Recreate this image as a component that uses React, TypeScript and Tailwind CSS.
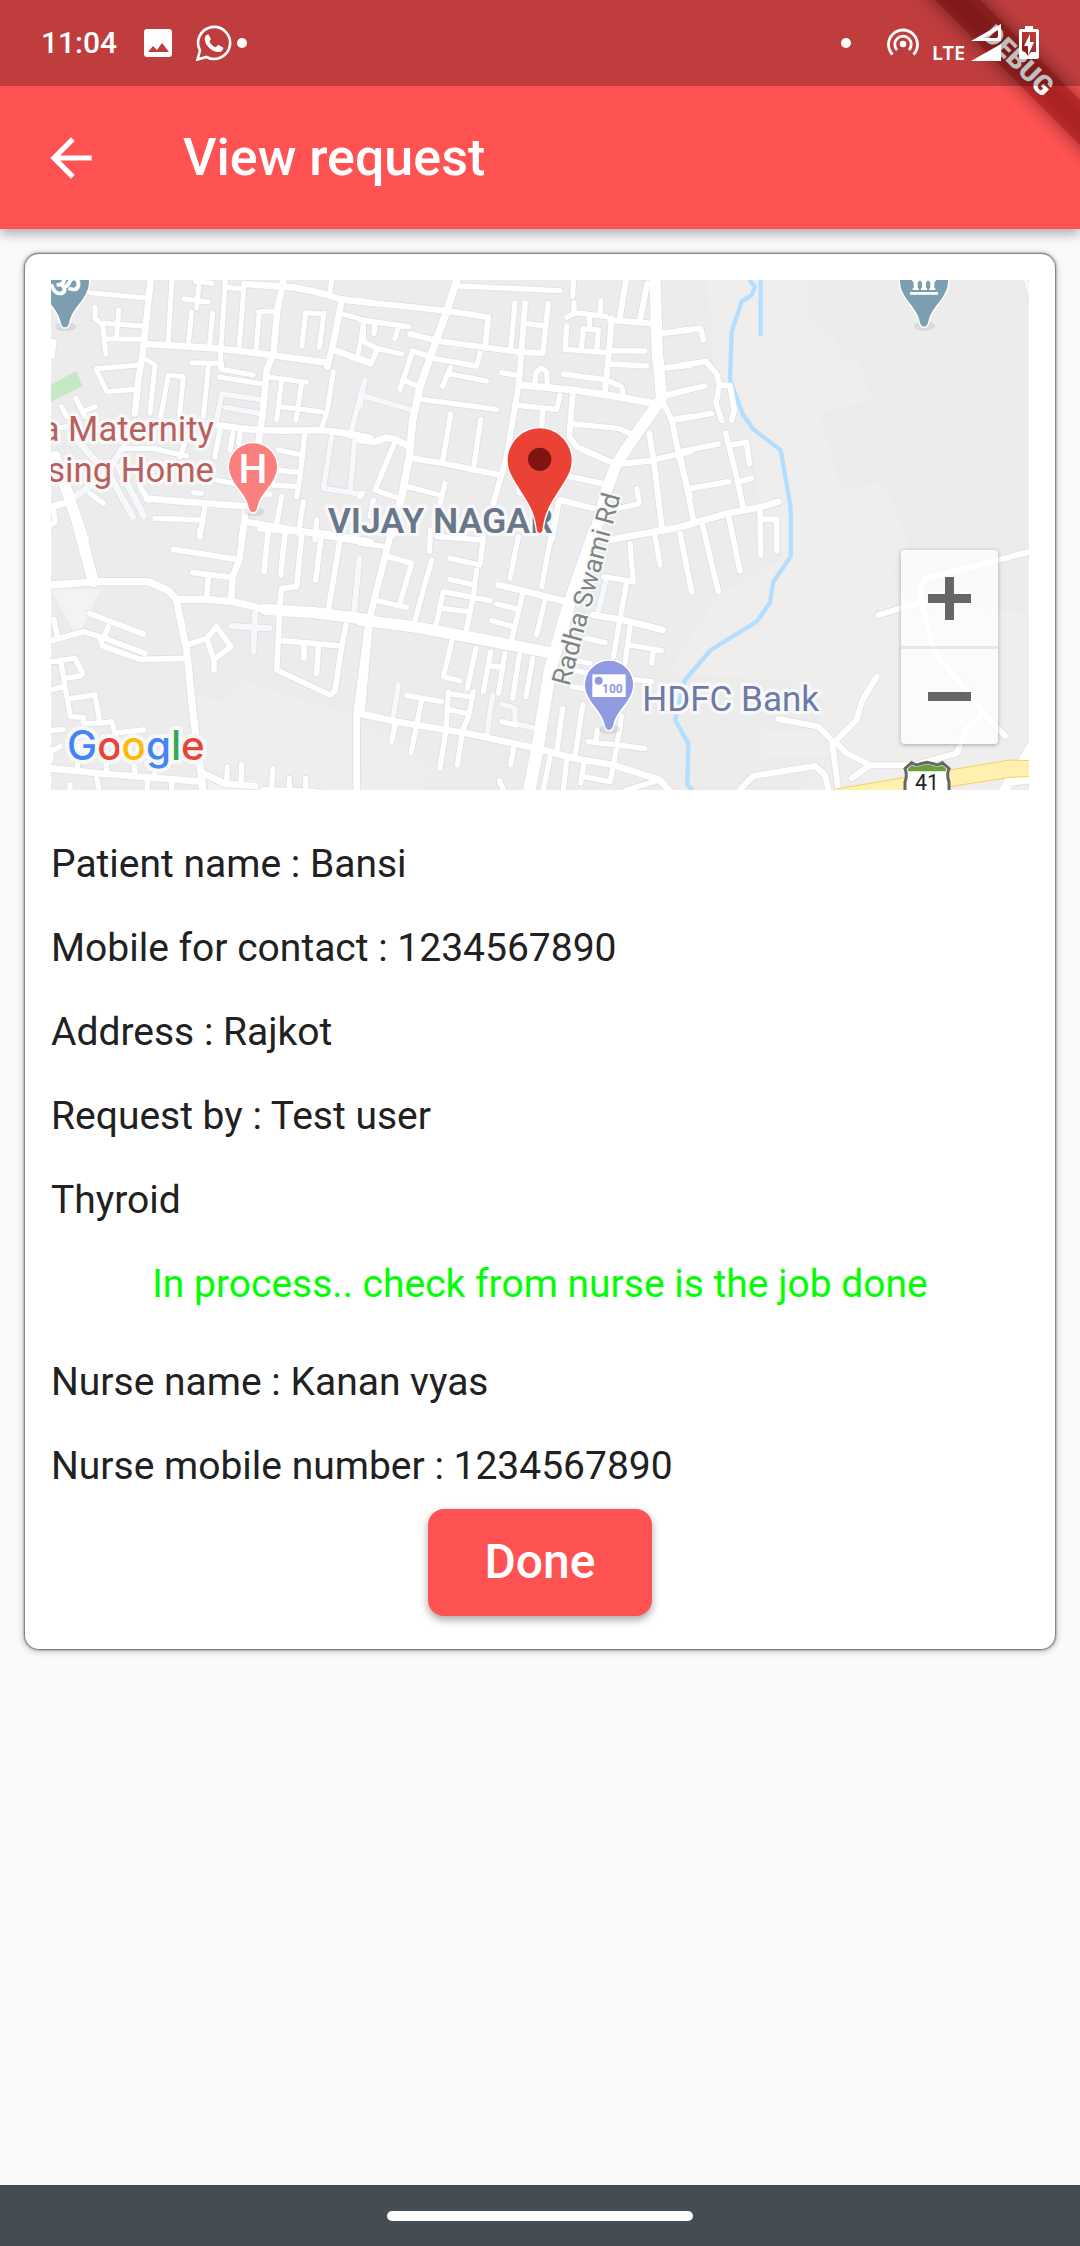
import React from "react";

type Road = { d: string; w: number; pale?: boolean };
type Tile = { x: number; y: number; roads: Road[] };

// The street network is split into six tiles, each with its own origin.
const tiles: Tile[] = [
  {
    x: -33,
    y: -30,
    roads: [
      { w: 16, pale: true, d: "M545,372 L660,388 M555,412 L655,430 M545,372 L530,450 M975,330 L945,440 L930,500 M960,375 L990,382 M875,500 L850,655 L960,672 M945,505 L930,665" },
      { w: 20, pale: true, d: "M105,680 L190,620 M200,600 L278,740 M235,590 L312,738 M120,520 L200,610 L250,530" },
      { w: 15, d: "M150,68 L325,85 M396,30 L384,220 M432,86 L505,96 M478,30 L470,115 M465,34 L515,40 M165,112 L165,145 L188,165 L197,252 M185,160 L310,168 M236,120 L230,200 M198,206 L310,208 M455,125 L445,225 M518,130 L508,235 M556,30 L550,130 L542,240 L542,295 M556,52 L610,58 M612,40 L606,130 L596,240 M655,125 L715,122 M658,125 L648,238 M795,128 L850,132 M797,128 L785,230 M852,130 L838,232 M875,30 L868,78 M900,130 L990,155 M972,155 L955,250 M295,285 L168,296 L200,365 L285,358 M318,268 L345,285 L330,430 M362,440 L385,315 L430,320 L418,440 M505,290 L490,440 M455,278 L545,280 L545,298 L640,315 M538,322 L670,342 M690,322 L800,337 M725,330 L710,450 M785,340 L768,452 M720,410 L845,425 M880,305 L862,420 L845,475" },
      { w: 16, d: "M540,480 L525,560 M578,490 L570,540 M600,490 L596,520 M715,540 L785,555 M712,600 L780,608 M700,645 L775,650 M795,490 L780,620 L770,680 M250,535 L340,535 L440,558 M440,500 L420,560 M530,630 L600,645 M300,650 L325,690 M460,668 L485,670 M345,745 L490,750 M495,710 L480,800 M150,670 L190,700 M108,385 L135,440 M65,410 L80,440 M130,425 L165,410 M33,480 L120,460 M725,680 L710,760 M675,672 L690,672 M790,695 L775,790 M830,750 L825,810 M33,215 L42,215 L36,260 M33,765 L45,755 L40,715" },
      { w: 20, d: "M332,30 L318,160 L308,250 L295,330 L285,430 M318,222 L540,236 L690,255 L860,278 M615,42 L760,52 L830,66 L905,88 L990,98 M730,30 L712,120 L700,250 L680,300 L668,430 L655,520 M905,90 L890,170 L875,240 L862,290 M878,238 L990,280 M530,465 L600,475 L650,480 L740,482 L840,480 L920,490 L990,503 M320,686 L500,700 L630,710 M33,710 L90,695 M618,715 L605,810 M615,755 L820,790 L990,820" },
      { w: 34, d: "M45,560 L90,690 L130,810" },
    ],
  },
  {
    x: 927,
    y: -30,
    roads: [
      { w: 15, pale: true, d: "M0,375 L155,420 M15,330 L0,410" },
      { w: 16, d: "M300,48 L600,62 M0,150 L145,170 M45,165 L42,190 M115,170 L105,205 M10,160 L10,215 L50,235 L125,252 M50,240 L35,278 L0,264 M465,98 L452,240 M565,100 L548,250 M495,160 L555,168 M205,258 L158,242 L120,358 M165,245 L220,265 L350,288 L360,250 M130,330 L175,350 M272,292 L248,348 M270,312 L380,333 M185,388 L410,418 M272,432 L248,575 M362,448 L340,600 M105,515 L45,660 L115,685 M140,650 L240,675 M255,640 L240,700 M0,680 L8,670 M40,690 L30,740 M640,30 L638,80 M642,98 L642,130 L620,142 M645,128 L740,140 M723,92 L720,130 M620,168 L615,238 L740,248 M688,145 L688,178 M715,180 L670,176 L663,240 M715,180 L710,240 M745,242 L855,243 M745,282 L860,288 M425,308 L480,318 M524,340 L528,310 Q545,282 560,308 L562,350 M610,312 L740,330 L785,350 L790,375 M465,405 L590,418 L600,375 M548,420 L545,470 M640,462 L775,475 L820,495 M830,655 L838,700 L760,720 M475,660 L480,670" },
      { w: 18, d: "M0,95 L260,122 L385,142 L375,235 M150,192 L230,212 L470,245 L545,250 M495,100 L485,240 L475,350 L440,560 L400,700 M155,565 L250,580 L420,615 M798,30 L780,140 M862,40 L840,150 M755,145 L748,240 L735,365 M750,150 L890,162 M905,190 L990,180 M905,295 L990,285 M910,378 L990,358 M638,375 L628,500 L650,530 L750,575 M780,582 L870,572 L990,545 M910,400 L935,450 L960,570 L990,680 M935,450 L990,440 M868,490 L885,600 L905,770 M630,620 L745,645 M600,690 L700,715 M595,700 L575,810 M750,810 L990,765" },
      { w: 21, d: "M0,510 L45,515 L80,503 L105,508 L150,530 M480,345 L640,360 L760,378 L890,402" },
      { w: 23, d: "M290,30 L260,125 L225,220 L180,350 L158,450 L148,560 L125,680 L100,790" },
      { w: 34, d: "M885,30 L892,250 L905,385 L830,490 L770,580 L740,660 L700,810" },
    ],
  },
  {
    x: 1887,
    y: -30,
    roads: [
      { w: 12, pale: true, d: "M1038,30 L1053,90" },
      { w: 17, d: "M0,182 L62,175 L70,210 M0,286 L78,275 L110,312 L118,345 L108,400 L125,452 M118,345 L150,347 L163,420 L155,450 M0,365 L75,348 M0,448 L95,430 M0,545 L115,522 M0,550 L40,750 M20,658 L145,635 M137,490 L165,600 L190,715 M150,525 L200,518 L208,582 M175,635 L215,625 M240,715 L242,855 M245,748 L290,747 L290,842 M65,755 L115,965 M145,735 L180,903 M0,790 L35,965" },
      { w: 20, d: "M0,770 L145,730 L240,712 L295,695" },
    ],
  },
  {
    x: -33,
    y: 750,
    roads: [
      { w: 18, pale: true, d: "M958,85 L942,250 M575,288 L688,295 M645,250 L640,365" },
      { w: 17, d: "M480,0 V20 M400,58 L590,88 M458,128 L575,142 M505,140 L500,205 M685,0 L672,125 M735,10 L722,135 M785,15 L770,170 L725,175 L718,235 M843,25 L827,150 M900,30 L865,240 M148,250 L310,312 M205,290 L190,325 M33,332 L130,305 L195,325 L315,370 M180,325 L188,348 L300,388 L430,385 M42,268 L52,320 M440,345 L500,325 L530,290 L572,350 L522,388 V420 M500,325 L522,390 M718,255 L715,330 L710,420 L870,495 L885,482 L905,350 L918,285 M725,332 L905,348 M792,345 V385 M835,350 L830,430 M950,550 L990,560" },
      { w: 16, d: "M33,395 L105,385 L128,430 L122,438 L70,445 M62,390 L75,470 L92,560 L130,562 M33,480 L70,470 M95,505 L165,495 L180,580 L130,580 L130,562 M180,580 L215,575 L228,620 M33,602 L70,598 M235,608 L310,600 M33,665 L60,650 M33,690 V660 M115,640 L112,710 M190,620 L200,720 M280,690 L285,730 M170,745 L178,780 M90,765 V780 M322,750 V780 M395,750 V780 M345,690 V740 M562,710 L560,755 M605,705 L603,755 M698,715 L695,770 M748,745 V775 M797,745 V775 M670,778 L830,784" },
      { w: 20, d: "M610,0 L598,90 L578,140 L573,210 M660,-5 L850,10 L990,35 M985,280 L950,550 V780 M33,715 L200,732 L485,755 M490,730 L550,760 L645,768" },
      { w: 22, d: "M33,165 L180,155 L325,155 L385,182 L410,208 L500,208 L580,215 L660,235 M410,215 L440,360 L460,560 L485,740 L488,780" },
      { w: 34, d: "M118,0 L160,155 M675,238 L820,248 L995,270" },
    ],
  },
  {
    x: 927,
    y: 750,
    roads: [
      { w: 16, pale: true, d: "M738,150 L715,245 M115,465 L100,560 M398,495 L380,615 M425,522 L465,535 L465,580 L525,595" },
      { w: 16, d: "M0,40 L80,50 M85,80 L155,100 L120,220 M45,210 L140,233 M215,90 L165,270 M212,0 L208,65 M230,20 L370,30 M370,20 L360,105 L270,85 M350,120 L340,200 L315,320 M270,148 L345,165 M250,185 L390,212 M250,185 L225,300 M245,235 L325,245 M475,20 L450,145 M575,10 L545,170 M490,182 L455,330 M410,222 L475,238 M395,272 L460,290 M555,210 L530,315 M810,40 L820,155 L730,140 M885,15 L900,105 M800,155 L760,380 M810,290 L795,400 M810,345 L905,362 M880,360 L875,400 M680,325 L735,338 M640,390 L690,400 M635,420 L690,430 M635,470 L700,480 M820,448 L875,455" },
      { w: 16, d: "M275,335 L250,440 L300,453 M348,355 L322,475 M392,365 L370,485 M435,370 L415,490 M390,408 L430,412 M478,375 L458,505 M518,385 L498,500 M140,497 L245,515 M185,510 L153,668 M105,585 L95,635 M265,485 L258,600 L240,715 M265,490 L325,500 M262,537 L318,550 M340,485 L325,560 L308,600 L292,705 M425,575 L465,585 M460,655 L452,705 M418,752 L430,780 M608,535 L590,665 M668,525 L645,680 M570,680 L550,780 M620,690 L610,780 M672,700 L662,760 M685,635 L855,655 M712,600 L708,635 M785,560 L760,710 L750,755 L670,740 M900,750 L800,780" },
      { w: 20, d: "M415,165 L490,182 L620,215 M745,30 L880,5 L945,-5 M700,255 L790,270 L908,300 M0,550 L110,575 L320,610 L530,655 L640,685 L760,705 L900,750 L930,785 M95,0 L70,100 L30,260 M30,270 L5,540" },
      { w: 34, d: "M0,270 L160,290 L400,335 L580,370" },
      { w: 38, d: "M705,0 L625,230 L570,420 L535,640 L507,785" },
    ],
  },
  {
    x: 1887,
    y: 750,
    roads: [
      { w: 18, d: "M595,255 L720,217 M1050,65 L740,145 L718,175 L735,260 L765,370 L850,470 L910,550 L975,618 M910,550 L860,595 L830,670 L700,706 L570,705 L500,670 L465,635 M590,440 L545,515 L530,570 L465,635 M295,567 L415,590 L455,630 L475,780 M570,705 L515,745 M175,785 L220,738 L405,708 L435,735 L447,785" },
      { w: 30, d: "M1060,640 L1025,700 M1055,745 L990,752 L970,785" },
    ],
  },
];

const pinPath =
  "M0,2 C-9,2 -12,-8 -14,-18 C-22,-50 -48,-70 -62,-97 A72,72 0 1 1 62,-97 C48,-70 22,-50 14,-18 C12,-8 9,2 0,2 Z";

function Pin({ x, y, fill, children }: { x: number; y: number; fill: string; children?: React.ReactNode }) {
  return (
    <g transform={`translate(${x} ${y})`}>
      <ellipse cx="2" cy="0" rx="32" ry="14" fill="#000" opacity="0.08" />
      <path d={pinPath} fill={fill} stroke="#fff" strokeWidth="9" strokeLinejoin="round" style={{ paintOrder: "stroke" }} />
      {children}
    </g>
  );
}

function MapDrawing() {
  return (
    <svg viewBox="0 0 2934 1530" className="block w-full h-auto" role="img" aria-label="Map of Vijay Nagar">
      <rect width="2934" height="1530" fill="#ececec" />
      <g fill="#efeeec">
        <path d="M1967,0 H2267 L2277,120 L2347,170 L2377,245 L2427,245 L2462,360 L2307,400 L2367,630 L2497,605 L2567,770 L2580,800 L2520,880 L2560,960 L2934,1000 V1530 H2250 L2350,1430 L2130,1430 V1354 H2270 L2340,1270 L2200,1200 L1850,1180 L2000,950 L2200,830 L2120,660 L2100,420 L1990,250 Z" />
        <path d="M440,1250 L527,1265 L567,1200 L900,1305 V1530 L790,1525 L457,1460 Z" />
        <path d="M927,1330 L1077,1410 L1150,1470 L1107,1530 H927 Z" />
      </g>
      <path d="M0,315 L75,273 L95,318 L0,365 Z" fill="#c5e8c5" />
      <path d="M2,928 H148 L90,1052 H65 Z M470,1500 H620 L640,1530 H470 Z" fill="#f1f3f5" />
      <g fill="none" stroke="#b3deff" strokeWidth="13" strokeLinejoin="round">
        <path d="M2095,0 L2112,20 L2102,45 L2072,65 L2042,155 L2037,300 L2075,402 L2107,448 L2189,510 L2219,682 V830 L2167,905 L2157,968 L2117,1025 L1979,1110 L1902,1200 L1872,1320 L1912,1390 L1909,1515 L1925,1530" />
        <path d="M2129,0 V168" />
      </g>
      {tiles.map((t, i) => (
        <g key={i} transform={`translate(${t.x} ${t.y})`} fill="none" stroke="#dcdde3" strokeLinecap="round" strokeLinejoin="round">
          {t.roads.map((r, j) => (
            <path key={j} d={r.d} strokeWidth={r.w + 4} />
          ))}
        </g>
      ))}
      {tiles.map((t, i) => (
        <g key={i} transform={`translate(${t.x} ${t.y})`} fill="none" strokeLinecap="round" strokeLinejoin="round">
          {t.roads.map((r, j) => (
            <path key={j} d={r.d} strokeWidth={r.w} stroke={r.pale ? "#f7f8fb" : "#ffffff"} />
          ))}
        </g>
      ))}
      <path d="M2355,1527 L2877,1440 L2940,1442 V1489 L2877,1492 L2600,1535 H2350 Z" fill="#fff0b0" stroke="#f6cf65" strokeWidth="3" />

      <g transform="translate(2628 1450)">
        <path
          d="M-66,16 L-46,-2 Q-34,8 -22,2 L0,-3 L22,2 Q34,8 46,-2 L66,16 Q58,34 66,56 L66,96 H-66 V56 Q-58,34 -66,16 Z"
          fill="#fff"
          stroke="#666"
          strokeWidth="9"
        />
        <path d="M-58,18 L-46,6 Q-34,12 -22,8 L0,3 L22,8 Q34,12 46,6 L58,18 L56,24 H-56 Z" fill="#6a9e3f" />
        <text x="0" y="80" textAnchor="middle" fontFamily="Roboto, sans-serif" fontSize="64" fill="#222">
          41
        </text>
      </g>

      <g fontFamily="Roboto, sans-serif" stroke="#f8f8f8" strokeWidth="20" strokeLinejoin="round">
        <g fontSize="104" fill="#b9605f" textAnchor="end">
          <text x="489" y="482" style={{ paintOrder: "stroke" }}>a Maternity</text>
          <text x="489" y="607" style={{ paintOrder: "stroke" }}>sing Home</text>
        </g>
        <text x="830" y="758" fontSize="107" fontWeight="600" fill="#68788a" style={{ paintOrder: "stroke" }}>
          VIJAY NAGAR
        </text>
        <text x="1774" y="1294" fontSize="105" fill="#6f79a8" style={{ paintOrder: "stroke" }}>
          HDFC Bank
        </text>
        <text
          transform="translate(1555 1220) rotate(-75)"
          fontSize="79"
          fill="#7d8585"
          strokeWidth="12"
          style={{ paintOrder: "stroke" }}
        >
          Radha Swami Rd
        </text>
      </g>

      <Pin x={42} y={140} fill="#7b9fb0">
        <text x="0" y="-88" textAnchor="middle" fontFamily="Noto Sans, sans-serif" fontSize="106" fill="#fff" stroke="#fff" strokeWidth="3">
          ॐ
        </text>
      </Pin>
      <Pin x={2619} y={138} fill="#7b9fb0">
        <path d="M-36,-142 H36 V-136 H-36 Z M-34,-140 H-16 V-132 H-19 V-114 H-16 V-108 H-34 V-114 H-31 V-132 H-34 Z M-9,-140 H9 V-132 H6 V-114 H9 V-108 H-9 V-114 H-6 V-132 H-9 Z M16,-140 H34 V-132 H31 V-114 H34 V-108 H16 V-114 H19 V-132 H16 Z M-42,-102 H42 V-94 H-42 Z" fill="#fff" />
      </Pin>
      <Pin x={606} y={695} fill="#fa8080">
        <text x="0" y="-87" textAnchor="middle" fontFamily="Roboto, sans-serif" fontWeight="500" fontSize="122" fill="#fff">
          H
        </text>
      </Pin>
      <Pin x={1674} y={1348} fill="#8f9ae0">
        <rect x="-50" y="-165" width="100" height="68" fill="#fff" />
        <circle cx="-31" cy="-146" r="12" fill="#8f9ae0" />
        <text x="10" y="-109" textAnchor="middle" fontFamily="Roboto, sans-serif" fontWeight="700" fontSize="36" fill="#8f9ae0">
          100
        </text>
      </Pin>
      <g transform="translate(1466 757)">
        <path
          d="M0,2 C-7,2 -9,-4 -9,-12 C-16,-76 -50,-108 -82,-166 A96,96 0 1 1 82,-166 C50,-108 16,-76 9,-12 C9,-4 7,2 0,2 Z"
          fill="#ea4335"
          stroke="#fff"
          strokeWidth="8"
          style={{ paintOrder: "stroke" }}
        />
        <circle cx="0" cy="-219" r="35" fill="#811411" />
      </g>

      <text
        x="48"
        y="1440"
        fontFamily="Inter, sans-serif"
        fontWeight="500"
        fontSize="121"
        stroke="#f8f8f8"
        strokeWidth="24"
        strokeLinejoin="round"
        style={{ paintOrder: "stroke" }}
      >
        <tspan fill="#4285f4">G</tspan>
        <tspan fill="#ea4335">o</tspan>
        <tspan fill="#fbbc05">o</tspan>
        <tspan fill="#4285f4">g</tspan>
        <tspan fill="#34a853">l</tspan>
        <tspan fill="#ea4335">e</tspan>
      </text>
    </svg>
  );
}

function DebugRibbon() {
  return (
    <svg viewBox="0 0 280 240" width="280" height="240" className="absolute top-0 right-0" aria-label="Debug">
      <defs>
        <filter id="ribbon-shadow" x="-30%" y="-30%" width="160%" height="160%">
          <feGaussianBlur stdDeviation="9" />
        </filter>
      </defs>
      <path d="M115,-20 L160,-20 L320,140 L320,185 Z" fill="#000" opacity="0.45" filter="url(#ribbon-shadow)" />
      <path d="M115,-20 L160,-20 L320,140 L320,185 Z" fill="#b71c1c" opacity="0.63" />
      <text
        transform="translate(219 60) rotate(45)"
        y="10"
        textAnchor="middle"
        fontFamily="Roboto, sans-serif"
        fontWeight="900"
        fontSize="27"
        fill="#fff"
      >
        DEBUG
      </text>
    </svg>
  );
}

function StatusBar() {
  return (
    <div className="relative flex h-[86px] items-center justify-between bg-black/25 pl-[41px] pr-[41px] text-white">
      <div className="flex items-center">
        <span className="w-[77px] text-[30px] leading-none font-medium">11:04</span>
        <svg viewBox="0 0 28 28" className="ml-[26px] size-7" aria-label="Picture">
          <path fillRule="evenodd" fill="#fff" d="M3,0 H25 Q28,0 28,3 V25 Q28,28 25,28 H3 Q0,28 0,25 V3 Q0,0 3,0 Z M4,23 H25 L18,14 L13,21 L9,17 Z" />
        </svg>
        <svg viewBox="0 0 36 36" className="ml-6 size-9" aria-label="WhatsApp">
          <path d="M1.500,34.500 L4,25.500 A16,16 0 1 1 10.500,32 Z" fill="none" stroke="#fff" strokeWidth="2.600" />
          <path
            d="M12.500,9.500 C11,9 8.500,11 8.700,14 C9,21 17,27.500 23,27 C26,26.600 27.800,24.500 27,22.500 L22.500,20 C21.500,20 20.500,22 19.800,22.300 C17,21.500 14.500,19 13.500,16.500 C13.800,15.500 15,14.800 14.800,13.800 Z"
            fill="#fff"
          />
        </svg>
        <span className="ml-[5px] size-[10px] rounded-full bg-white" />
      </div>
      <div className="flex items-center">
        <span className="size-[10px] rounded-full bg-white" />
        <svg viewBox="0 0 34 34" className="ml-[35px] size-[34px]" aria-label="Hotspot">
          <g fill="none" stroke="#fff" strokeWidth="2.800">
            <path d="M6.500,28.500 A14.500,14.500 0 1 1 27.500,28.500" />
            <path d="M11,24 A8.200,8.200 0 1 1 23,24" />
          </g>
          <circle cx="17" cy="18" r="3.300" fill="#fff" />
        </svg>
        <span className="ml-3 mt-5 w-[34px] font-['Noto_Sans',sans-serif] text-[20px] leading-none font-semibold">LTE</span>
        <svg viewBox="0 0 30 38" className="ml-[5px] h-[38px] w-[30px]" aria-label="Signal">
          <path d="M0,17 L30,0 V17 Z M13,14 H27 V6 Z M0,37 L30,20 V37 Z" fill="#fff" fillRule="evenodd" />
        </svg>
        <svg viewBox="0 0 20 34" className="ml-[18px] h-[34px] w-5" aria-label="Battery charging">
          <path fill="#fff" fillRule="evenodd" d="M6,0 H14 V3 H18 Q20,3 20,5 V31 Q20,33 18,33 H2 Q0,33 0,31 V5 Q0,3 2,3 H6 Z M3,6 V26 H6 L9,30 L12,26 H17 V6 Z" />
          <path d="M11,8 L5,20 H9 V30 L15,16 H11 V8 Z" fill="#fff" />
        </svg>
      </div>
    </div>
  );
}

const requestDetails = [
  "Patient name : Bansi",
  "Mobile for contact : 1234567890",
  "Address : Rajkot",
  "Request by : Test user",
  "Thyroid",
];

const nurseDetails = ["Nurse name : Kanan vyas", "Nurse mobile number : 1234567890"];

export default function App() {
  return (
    <div className="flex min-h-screen flex-col bg-[#fafafa] font-['Roboto',sans-serif] text-[#212121]">
      <header className="relative bg-[#ff5252] text-white shadow-[0_4px_12px_rgba(0,0,0,0.35)]">
        <DebugRibbon />
        <StatusBar />
        <div className="flex h-[143px] items-center pl-[39px]">
          <button type="button" aria-label="Back" className="flex size-16 items-center justify-center">
            <svg viewBox="0 0 24 24" className="size-[62px]" fill="#fff">
              <path d="M20 11H7.830l5.590-5.590L12 4l-8 8 8 8 1.410-1.410L7.830 13H20v-2z" />
            </svg>
          </button>
          <h1 className="ml-20 text-[52px] leading-none font-medium">View request</h1>
        </div>
      </header>

      <main className="flex-1 px-[25px] pt-[25px]">
        <section className="rounded-[14px] bg-white px-[26px] pt-[26px] pb-[33px] shadow-[0_0_2px_1px_rgba(60,65,65,0.75),0_1px_6px_2px_rgba(0,0,0,0.2)]">
          <div className="relative">
            <MapDrawing />
            <div className="absolute right-[31px] bottom-[46px] flex w-[97px] flex-col rounded bg-white/75 shadow-[0_1px_4px_rgba(0,0,0,0.3)]">
              <button type="button" aria-label="Zoom in" className="flex h-24 items-center justify-center">
                <svg viewBox="0 0 43 43" className="size-[43px]" fill="#666">
                  <path d="M17,0 H26 V17 H43 V26 H26 V43 H17 V26 H0 V17 H17 Z" />
                </svg>
              </button>
              <div className="h-[3px] bg-black/8" />
              <button type="button" aria-label="Zoom out" className="flex h-[95px] items-center justify-center">
                <span className="h-[9px] w-[43px] bg-[#666]" />
              </button>
            </div>
          </div>

          <div className="mt-8 text-[39px] leading-[84px]">
            {requestDetails.map((line) => (
              <p key={line}>{line}</p>
            ))}
            <p className="text-center text-[#00ff00]">In process.. check from nurse is the job done</p>
            <div className="mt-[14px]">
              {nurseDetails.map((line) => (
                <p key={line}>{line}</p>
              ))}
            </div>
          </div>

          <div className="mt-px flex justify-center">
            <button
              type="button"
              className="h-[107px] w-[224px] rounded-2xl bg-[#ff5252] pb-[2px] text-[48px] leading-none font-medium text-white shadow-[0_4px_8px_rgba(0,0,0,0.35)]"
            >
              Done
            </button>
          </div>
        </section>
      </main>

      <footer className="flex h-[61px] items-center justify-center bg-[#454d52]">
        <span className="h-[10px] w-[306px] rounded-full bg-white" />
      </footer>
    </div>
  );
}
